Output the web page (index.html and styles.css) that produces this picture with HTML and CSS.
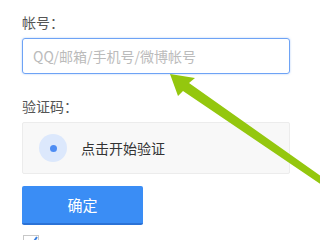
FILE: index.html
```html
<!DOCTYPE html>
<html lang="zh-CN">
<head>
<meta charset="utf-8">
<link rel="stylesheet" href="styles.css">
</head>
<body>
<div class="form">
  <div class="label">帐号：</div>
  <div class="input"><span class="placeholder">QQ/邮箱/手机号/微博帐号</span></div>
  <div class="label label-2">验证码：</div>
  <div class="captcha">
    <span class="ring"><span class="dot"></span></span>
    <span class="captcha-text">点击开始验证</span>
  </div>
  <div class="btn">确定</div>
  <div class="check">
    <svg width="16" height="16" viewBox="0 0 16 16"><rect x="0.5" y="0.5" width="15" height="15" fill="#fff" stroke="#c8c8c8"/><path d="M3 8 L7 12 L14 2" fill="none" stroke="#3a7fe0" stroke-width="2"/></svg>
  </div>
</div>
<svg class="arrow" width="320" height="240" viewBox="0 0 320 240">
  <polygon points="170,74 195,78 189,83 322,177 322,185 183,91 178,96" fill="#94c70e"/>
</svg>
</body>
</html>
```
FILE: styles.css
```css
html, body {
  margin: 0;
  padding: 0;
  background: #fff;
  width: 320px;
  height: 240px;
  overflow: hidden;
  font-family: "Noto Sans CJK SC", "Noto Sans", sans-serif;
}
.form {
  padding: 13px 0 0 22px;
  width: 268px;
  display: flex;
  flex-direction: column;
}
.label {
  font-size: 14px;
  line-height: 18px;
  color: #555;
  height: 18px;
  margin-bottom: 7px;
}
.label-2 {
  margin-top: 23px;
}
.input {
  box-sizing: border-box;
  height: 36px;
  width: 268px;
  border: 1px solid #6ea3f5;
  border-radius: 3px;
  box-shadow: 0 0 2px rgba(90, 150, 245, 0.5);
  display: flex;
  align-items: center;
  padding-left: 10px;
}
.placeholder {
  font-size: 14px;
  color: #bbb;
}
.captcha {
  box-sizing: border-box;
  height: 52px;
  width: 268px;
  background: #f8f8f8;
  border: 1px solid #ececec;
  border-radius: 2px;
  display: flex;
  align-items: center;
  padding-left: 16px;
}
.ring {
  width: 28px;
  height: 28px;
  border-radius: 50%;
  background: #dce8fc;
  display: flex;
  align-items: center;
  justify-content: center;
}
.dot {
  width: 7px;
  height: 7px;
  border-radius: 50%;
  background: #4d8cf3;
}
.captcha-text {
  margin-left: 14px;
  font-size: 14px;
  color: #333;
}
.btn {
  margin-top: 12px;
  box-sizing: border-box;
  width: 121px;
  height: 39px;
  background: #3a8df5;
  border-bottom: 2px solid #2b72d6;
  border-radius: 2px;
  color: #fff;
  font-size: 15px;
  display: flex;
  align-items: center;
  justify-content: center;
}
.check {
  margin-top: 10px;
  margin-left: 1px;
  height: 16px;
}
.check svg {
  display: block;
}
.arrow {
  position: absolute;
  left: 0;
  top: 0;
}
```
